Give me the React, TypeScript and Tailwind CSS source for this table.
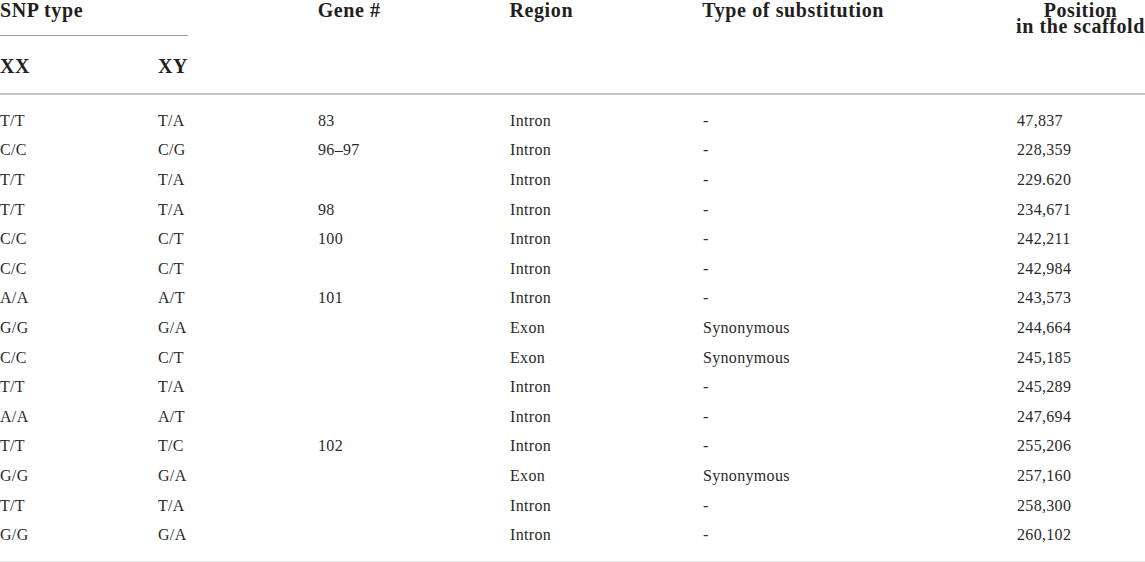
const rows: [string, string, string, string, string, string][] = [
  ['T/T', 'T/A', '83', 'Intron', '-', '47,837'],
  ['C/C', 'C/G', '96–97', 'Intron', '-', '228,359'],
  ['T/T', 'T/A', '', 'Intron', '-', '229.620'],
  ['T/T', 'T/A', '98', 'Intron', '-', '234,671'],
  ['C/C', 'C/T', '100', 'Intron', '-', '242,211'],
  ['C/C', 'C/T', '', 'Intron', '-', '242,984'],
  ['A/A', 'A/T', '101', 'Intron', '-', '243,573'],
  ['G/G', 'G/A', '', 'Exon', 'Synonymous', '244,664'],
  ['C/C', 'C/T', '', 'Exon', 'Synonymous', '245,185'],
  ['T/T', 'T/A', '', 'Intron', '-', '245,289'],
  ['A/A', 'A/T', '', 'Intron', '-', '247,694'],
  ['T/T', 'T/C', '102', 'Intron', '-', '255,206'],
  ['G/G', 'G/A', '', 'Exon', 'Synonymous', '257,160'],
  ['T/T', 'T/A', '', 'Intron', '-', '258,300'],
  ['G/G', 'G/A', '', 'Intron', '-', '260,102'],
]

export default function App() {
  return (
    <div className="w-[1145px] h-[562px] bg-white text-[#231f20] font-['Liberation_Serif',serif] overflow-hidden">
      {/* Header */}
      <div className="flex h-[95px] border-b-2 border-[#c4c4c4] text-[20px] font-bold tracking-[0.03em]">
        <div className="w-[318px] flex flex-col">
          <div className="leading-[20px]">SNP type</div>
          <div className="w-[188px] mt-[15px] border-b border-[#9a9a9a]" />
          <div className="flex mt-[20px] leading-[20px]">
            <div className="w-[158px]">XX</div>
            <div>XY</div>
          </div>
        </div>
        <div className="w-[192px] leading-[20px]">Gene #</div>
        <div className="w-[193px] leading-[20px]">Region</div>
        <div className="w-[314px] leading-[20px]">Type of substitution</div>
        <div className="flex-1 flex flex-col items-center pt-[2px] whitespace-nowrap">
          <div className="leading-[16px]">Position</div>
          <div className="leading-[16px]">in the scaffold</div>
        </div>
      </div>

      {/* Body */}
      <div className="py-[11px] border-b border-[#e2e2e2] text-[16px] tracking-[0.02em] text-[#2a2a2a]">
        {rows.map((r, i) => (
          <div key={i} className="flex items-center h-[29.6px]">
            <div className="w-[158px]">{r[0]}</div>
            <div className="w-[160px]">{r[1]}</div>
            <div className="w-[192px]">{r[2]}</div>
            <div className="w-[193px]">{r[3]}</div>
            <div className="w-[314px]">{r[4]}</div>
            <div className="flex-1">{r[5]}</div>
          </div>
        ))}
      </div>
    </div>
  )
}
